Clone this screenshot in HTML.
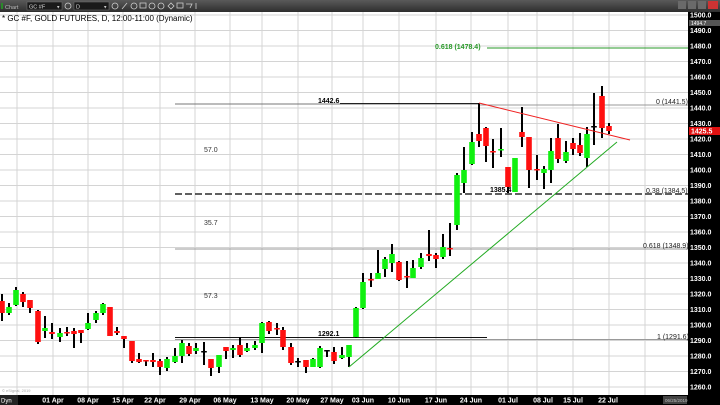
<!DOCTYPE html>
<html><head><meta charset="utf-8"><style>
html,body{margin:0;padding:0;background:#fff;width:720px;height:405px;overflow:hidden}
svg{display:block;font-family:"Liberation Sans",sans-serif}
</style></head><body>
<svg id="s" width="720" height="405" viewBox="0 0 720 405" xmlns="http://www.w3.org/2000/svg">
<defs><linearGradient id="tb" x1="0" y1="0" x2="0" y2="1"><stop offset="0" stop-color="#5a5a5a"/><stop offset="1" stop-color="#2e2e2e"/></linearGradient></defs>
<rect x="0" y="0" width="720" height="405" fill="#fff"/>
<g id="grid" stroke="#d4d4d4" stroke-width="1"></g>
<!-- toolbar -->
<rect x="0" y="0" width="720" height="12" fill="url(#tb)"/>
<rect x="1" y="3" width="2" height="6" fill="#2a8a2a"/>
<text x="5" y="9" font-size="5.5" fill="#bbb">Chart</text>
<rect x="27" y="2" width="35" height="8" fill="#1a1a1a" stroke="#777" stroke-width="0.5"/>
<text x="29" y="8.5" font-size="5.5" fill="#ddd">GC #F</text>
<text x="57" y="8.5" font-size="5" fill="#ccc">▾</text>
<circle cx="68" cy="6" r="3" fill="none" stroke="#ccc" stroke-width="0.8"/>
<rect x="74" y="2" width="35" height="8" fill="#1a1a1a" stroke="#777" stroke-width="0.5"/>
<text x="76" y="8.5" font-size="5.5" fill="#ddd">D</text>
<text x="104" y="8.5" font-size="5" fill="#ccc">▾</text>
<g fill="none" stroke="#ccc" stroke-width="0.8">
<circle cx="115" cy="6" r="3"/><path d="M122 9 L127 3"/><circle cx="134" cy="6" r="3"/><rect x="140" y="3" width="6" height="5"/><circle cx="152" cy="6" r="3"/><circle cx="161" cy="6" r="3"/><path d="M168 6 L171 3 L174 6 L171 9Z"/><rect x="177" y="3" width="6" height="5"/><path d="M186 4 L192 4 L190 8"/><path d="M196 3 L196 9"/>
</g>
<g fill="#6a6a6a"><rect x="678" y="1" width="8" height="8"/><rect x="688" y="1" width="8" height="8"/><rect x="698" y="1" width="8" height="8"/></g>
<rect x="708" y="1" width="10" height="8" fill="#c33"/>
<text x="2" y="21" font-size="8" fill="#000">* GC #F, GOLD FUTURES, D, 12:00-11:00 (Dynamic)</text>
<!-- fib / levels -->
<line x1="175" y1="104" x2="480" y2="104" stroke="#777" stroke-width="1"/>
<line x1="340" y1="103.5" x2="480" y2="103.5" stroke="#222" stroke-width="1"/>
<line x1="480" y1="105" x2="688" y2="105" stroke="#999" stroke-width="1"/>
<text x="318" y="103" font-size="7" font-weight="bold" fill="#000">1442.6</text>
<text x="656" y="104" font-size="7" fill="#222">0 (1441.5)</text>
<line x1="487" y1="48" x2="688" y2="48" stroke="#2a9a2a" stroke-width="1"/>
<text x="435" y="49" font-size="7" font-weight="bold" fill="#2a9a2a">0.618 (1478.4)</text>
<line x1="175" y1="194" x2="688" y2="194" stroke="#000" stroke-width="1.3" stroke-dasharray="7,3"/>
<text x="490" y="192" font-size="7" font-weight="bold" fill="#000">1385.4</text>
<text x="646" y="193" font-size="7" fill="#222">0.38 (1384.5)</text>
<line x1="175" y1="249" x2="688" y2="249" stroke="#999" stroke-width="1"/>
<text x="643" y="248" font-size="7" fill="#222">0.618 (1348.9)</text>
<line x1="175" y1="339.5" x2="688" y2="339.5" stroke="#999" stroke-width="1"/>
<line x1="175" y1="337.5" x2="487" y2="337.5" stroke="#111" stroke-width="1"/>
<text x="318" y="336" font-size="7" font-weight="bold" fill="#000">1292.1</text>
<text x="657" y="339" font-size="7" fill="#222">1 (1291.6)</text>
<text x="204" y="152" font-size="7" fill="#333">57.0</text>
<text x="204" y="225" font-size="7" fill="#333">35.7</text>
<text x="204" y="298" font-size="7" fill="#333">57.3</text>
<g id="c"></g>
<line x1="479" y1="103" x2="630" y2="140" stroke="#f02020" stroke-width="1"/>
<line x1="349" y1="367" x2="617" y2="142" stroke="#22aa22" stroke-width="1"/>
<text x="2" y="392" font-size="4" fill="#aaa">© eSignal, 2019</text>
<!-- axes -->
<rect x="688" y="12" width="32" height="393" fill="#000"/>
<rect x="0" y="395" width="720" height="10" fill="#000"/>
<g id="ax" font-size="7" font-weight="bold" fill="#fff"></g>
<rect x="689" y="20" width="31" height="6" fill="#555"/>
<text x="691" y="25" font-size="5" fill="#fff">1494.7</text>
<rect x="689" y="127" width="31" height="8" fill="#e01010"/>
<text x="691" y="133.5" font-size="7" font-weight="bold" fill="#fff">1425.5</text>
<rect x="0" y="395" width="18" height="10" fill="#222"/>
<text x="1" y="402.5" font-size="6" fill="#fff">Dyn</text>
<rect x="663" y="396" width="24" height="8" fill="#444"/>
<text x="665" y="402" font-size="4.5" fill="#bbb">06/25/2019</text>
<g id="dl" font-size="7" font-weight="bold" fill="#fff" text-anchor="middle"></g>
</svg>
<script>
var NS="http://www.w3.org/2000/svg";
function el(p,t,a,txt){var e=document.createElementNS(NS,t);for(var k in a)e.setAttribute(k,a[k]);if(txt!=null)e.textContent=txt;document.getElementById(p).appendChild(e);}
for(var i=0;i<26;i++){var y=15+i*15.5;el("grid","line",{x1:0,y1:y,x2:688,y2:y});}
var vx=[17,53,88,123,160,195,230,262,298,332,363,399,436,471,508,537,573,609,645];
vx.forEach(function(x){el("grid","line",{x1:x,y1:12,x2:x,y2:395});});
for(var i=0;i<25;i++){var y=15+i*15.5;el("ax","text",{x:690,y:y+2.5},(1500-i*10)+".0");}
var dl=[["01 Apr",53],["08 Apr",88],["15 Apr",123],["22 Apr",155],["29 Apr",190],["06 May",225],["13 May",262],["20 May",298],["27 May",332],["03 Jun",363],["10 Jun",399],["17 Jun",436],["24 Jun",471],["01 Jul",508],["08 Jul",543],["15 Jul",573],["22 Jul",608]];
dl.forEach(function(d){el("dl","text",{x:d[1],y:402.5},d[0]);});
var C=[[2,301,313,294,321,'r'],[9,307,313,303,315,'g'],[16,290,305,287,306,'g'],[23,294,302,292,307,'r'],[30,300,308,300,313,'r'],[38,311,342,310,344,'r'],[45,328,331,316,338,'g'],[52,332,334,323,339,'r'],[60,333,337,328,342,'g'],[67,332,333,327,336,'r'],[74,331,334,328,348,'r'],[81,330,333,330,343,'r'],[88,323,329,313,330,'g'],[96,313,320,311,323,'g'],[103,304,313,303,315,'g'],[110,307,336,307,336,'r'],[117,331,333,327,335,'r'],[124,336,339,336,348,'r'],[132,341,361,341,363,'r'],[139,359,362,353,363,'r'],[146,360,361,360,366,'r'],[153,360,362,353,367,'r'],[160,361,367,359,375,'r'],[167,359,368,357,371,'g'],[175,356,362,348,363,'g'],[182,343,356,340,363,'g'],[189,346,354,343,356,'r'],[196,348,351,343,354,'g'],[204,351,352,342,365,'k'],[211,359,368,359,376,'r'],[219,355,367,355,373,'g'],[226,347,351,347,359,'r'],[233,348,350,345,358,'g'],
[240,345,355,337,357,'r'],[247,348,351,343,352,'g'],[255,345,348,341,350,'g'],[262,323,343,322,353,'g'],[269,322,331,321,334,'r'],[277,328,329,323,335,'r'],[283,330,347,327,350,'r'],[291,347,363,343,365,'r'],[298,361,362,358,367,'k'],[306,360,367,360,373,'r'],[313,359,367,358,367,'g'],[320,348,367,346,368,'g'],[327,350,351,350,357,'k'],[334,352,361,347,364,'r'],[342,355,358,347,359,'g'],[349,345,357,345,367,'g'],[356,308,337,307,338,'g'],[363,282,308,273,309,'g'],[371,279,280,273,287,'r'],[378,273,279,250,279,'g'],[385,259,269,257,277,'g'],[392,254,263,244,272,'g'],[399,262,280,261,281,'r'],[407,276,277,261,288,'r'],[413,268,278,260,278,'g'],[421,258,267,253,269,'g'],[429,254,256,230,261,'r'],[436,255,259,253,268,'r'],[443,247,257,234,259,'g'],[450,248,249,223,256,'r'],
[457,175,225,173,230,'g'],[464,170,183,147,193,'g'],[472,142,164,132,165,'g'],[479,134,141,103,147,'r'],[486,128,146,127,162,'r'],[493,151,152,139,168,'r'],[501,149,150,128,157,'g'],[508,167,187,167,193,'r'],[515,158,192,158,192,'g'],[522,132,137,107,147,'r'],[529,137,170,137,188,'r'],[537,169,170,155,180,'r'],[544,169,173,166,189,'g'],[551,151,170,138,183,'g'],[558,138,159,124,163,'r'],[566,152,161,141,163,'g'],[573,143,149,138,155,'r'],[580,145,153,133,156,'r'],[587,134,158,127,167,'g'],[594,126,127,93,145,'k'],[602,96,128,86,138,'r'],[609,126,131,123,134,'r']];
C.forEach(function(c){
el("c","rect",{x:c[0]-1,y:c[3],width:2,height:c[4]-c[3],fill:"#000"});
var col=c[5]=='r'?"#ff1010":(c[5]=='g'?"#10f010":"#000");
var h=Math.max(c[2]-c[1],1.5);
el("c","rect",{x:c[0]-2.8,y:c[1],width:5.6,height:h,fill:col});
});
</script>
</body></html>
